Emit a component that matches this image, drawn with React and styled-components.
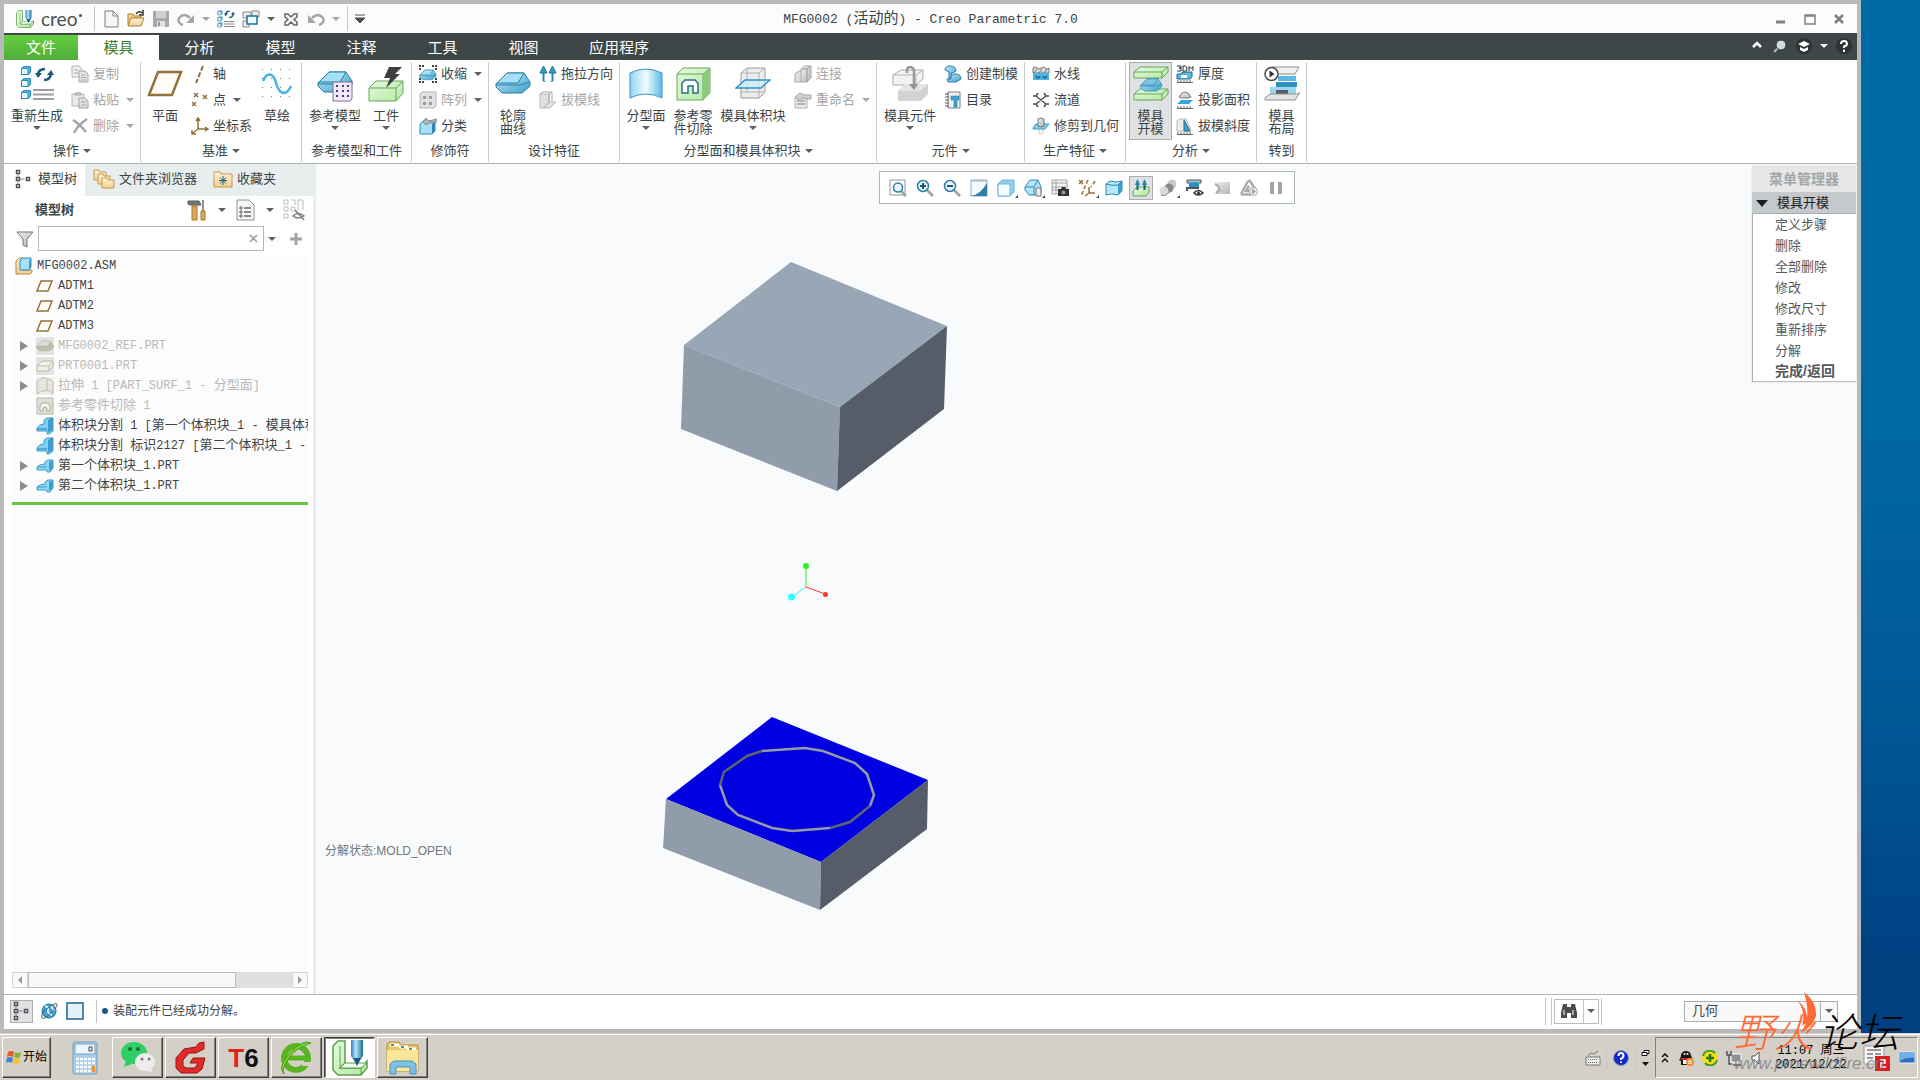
import React, { useState } from "react";
import styled, { createGlobalStyle } from "styled-components";

const GlobalStyle = createGlobalStyle`
  * {
    box-sizing: border-box;
  }
  body {
    margin: 0;
    font-family: "Liberation Sans", "Noto Sans CJK SC", sans-serif;
    font-size: 13px;
    line-height: 16px;
    color: #3b4446;
  }
  button {
    margin: 0;
    padding: 0;
    border: none;
    background: none;
    font: inherit;
    color: inherit;
    cursor: pointer;
  }
  svg {
    display: block;
    flex: none;
  }
`;

/* ---------- Layout ---------- */

const Screen = styled.div`
  display: flex;
  flex-direction: column;
  min-height: 100vh;
  position: relative;
`;

const Desktop = styled.div`
  display: flex;
  flex: 1;
  padding-right: 59px;
  background: linear-gradient(#006aa6 0%, #0069a5 40%, #005795 70%, #003f80 95%);
`;

const Window = styled.main`
  display: flex;
  flex-direction: column;
  flex: 1;
  min-width: 0;
  border: 4px solid #b9b9b9;
  background: #fff;
`;

const Workspace = styled.div`
  display: flex;
  flex: 1;
  min-height: 0;
`;

/* ---------- Shared pieces ---------- */

const Caret = styled.span`
  flex: none;
  width: 0;
  height: 0;
  border: 4px solid transparent;
  border-top-color: ${({ $color }) => $color || "#5c6162"};
  border-bottom: none;
`;

const Mono = styled.span`
  font-family: "Liberation Mono", monospace;
  font-size: ${({ $size }) => $size || 12}px;
`;

// Latin runs are set in the narrow fixed face, Chinese runs keep the parent font
const Mixed = ({ text, size }) =>
  text
    .split(/([\x20-\x7e]+)/)
    .filter(Boolean)
    .map((run, i) =>
      /^[\x20-\x7e]/.test(run) ? (
        <Mono key={i} $size={size}>
          {run}
        </Mono>
      ) : (
        run
      )
    );

const Svg = ({ size = 18, box, children }) => (
  <svg width={size} height={size} viewBox={`0 0 ${box || size} ${box || size}`} fill="none" aria-hidden="true">
    {children}
  </svg>
);

const GradientDefs = styled.svg`
  position: absolute;
  width: 0;
  height: 0;
`;

const Gradients = () => (
  <GradientDefs aria-hidden="true">
    <defs>
      <linearGradient id="blue" x1="0" y1="0" x2="1" y2="1">
        <stop offset="0" stopColor="#c4ecfa" />
        <stop offset="1" stopColor="#3c9fcd" />
      </linearGradient>
      <linearGradient id="sheet" x1="0" y1="0" x2="1" y2="0">
        <stop offset="0" stopColor="#8fd6f5" />
        <stop offset="0.5" stopColor="#f2fbff" />
        <stop offset="1" stopColor="#5cbbe8" />
      </linearGradient>
      <linearGradient id="green" x1="0" y1="0" x2="1" y2="1">
        <stop offset="0" stopColor="#e4fbdc" />
        <stop offset="1" stopColor="#b4e8a4" />
      </linearGradient>
      <linearGradient id="gray" x1="0" y1="0" x2="1" y2="1">
        <stop offset="0" stopColor="#f0f0f0" />
        <stop offset="1" stopColor="#b4b4b4" />
      </linearGradient>
      <linearGradient id="folder" x1="0" y1="0" x2="0" y2="1">
        <stop offset="0" stopColor="#fff4dc" />
        <stop offset="1" stopColor="#f0cf90" />
      </linearGradient>
      <linearGradient id="steel" x1="0" y1="0" x2="1" y2="0">
        <stop offset="0" stopColor="#2d84b4" />
        <stop offset="0.4" stopColor="#b7e4f7" />
        <stop offset="1" stopColor="#1f6c97" />
      </linearGradient>
    </defs>
  </GradientDefs>
);

/* ---------- Icons ---------- */

const Gem = ({ top = "#a4dff5", side = "url(#blue)", line = "#2a7ea6" }) => (
  <g stroke={line} strokeWidth="1">
    <path d="M1 17 12 6h17l6 9v4l-8 7H7l-6-6Z" fill={side} />
    <path d="M1 17 12 6h17l-6 10H1.500Z" fill={top} />
    <path d="M1 18h24l10-3" />
  </g>
);

const Slab = ({ y = 0, fill = "url(#green)", line = "#6aa35c" }) => (
  <g transform={`translate(0 ${y})`} stroke={line} strokeWidth="1" strokeLinejoin="round">
    <path d="M1 6 7 1h28v5l-6 6H1Z" fill={fill} />
    <path d="M1 6h28l6-5M29 6v6" />
  </g>
);

const MiniCube = ({ x = 0, y = 0 }) => (
  <g transform={`translate(${x} ${y})`} strokeWidth="1" stroke="#2b8db8">
    <path d="M0.500 2.500 2.500 0.500h7v6l-2 2h-7Z" fill="#5ab6dc" />
    <path d="M0.500 2.500h6.500v6H0.500Z" fill="#e6f7fd" />
  </g>
);

// two chasing arrows
const Cycle = () => (
  <g stroke="#17597c" strokeWidth="2.500">
    <path d="M3 7q1-5 7-5M16 7q-1 6-7 6" />
    <path d="M0 6h7L3 11ZM12 8h7l-3-5Z" fill="#17597c" stroke="none" />
  </g>
);

const RegenBig = () => (
  <Svg size={36}>
    <MiniCube x={2} y={0} />
    <MiniCube x={2} y={12} />
    <MiniCube x={2} y={24} />
    <g transform="translate(16 1)">
      <Cycle />
    </g>
    <path d="M14 24h21M14 28.500h21M14 33h21" stroke="#9b9fa1" strokeWidth="2" />
  </Svg>
);

const PlaneBig = () => (
  <Svg size={36}>
    <path d="M2 29 11 6h23l-9 23Z" fill="#fffdf8" stroke="#94713a" strokeWidth="2.500" />
  </Svg>
);

const SketchBig = () => (
  <Svg size={36}>
    <g fill="#777">
      {[3, 12, 21, 30].map((y) => [3, 12, 21, 30].map((x) => <rect key={`${x}-${y}`} x={x} y={y} width="1" height="1" />))}
    </g>
    <path d="M4 15c4-9 10-9 13 2s10 14 15 3" stroke="#45b3e8" strokeWidth="2.500" />
  </Svg>
);

const RefModelBig = () => (
  <Svg size={36}>
    <Gem />
    <path d="M16 16h19v17l-2 2H16Z" fill="#efe9f8" stroke="#7d7496" />
    <path d="M19 20h2m4 0h2m3 0h2M19 25h2m4 0h2m3 0h2M19 30h2m4 0h2m3 0h2" stroke="#4b3a82" strokeWidth="2" />
  </Svg>
);

const WorkpieceBig = () => (
  <Svg size={36}>
    <path d="M1 22 8 15h27v12l-7 8H1Z" fill="url(#green)" stroke="#6aa35c" />
    <path d="M1 22h27l7-7M28 22v13" stroke="#6aa35c" />
    <path d="M21 1h13l-7 7h5L18 22l4-10h-6Z" fill="#3d4041" />
  </Svg>
);

const GemBig = () => (
  <Svg size={36}>
    <g transform="translate(0 1)">
      <Gem />
    </g>
  </Svg>
);

const SheetBig = () => (
  <Svg size={36}>
    <path d="M2 7q16-8 32 0v25q-16-8-32 0Z" fill="url(#sheet)" stroke="#3d94c0" />
  </Svg>
);

const CutBig = () => (
  <Svg size={36}>
    <path d="M2 8 8 2h27v25l-7 7H2Z" fill="url(#green)" stroke="#6aa35c" />
    <path d="M2 8h26l7-6M28 8v26" stroke="#6aa35c" />
    <path d="M28 8l7-6v25l-7 7Z" fill="#8fcb7c" />
    <path d="M7 27V17l3-3h10l3 3v10h-5v-7h-5v7Z" fill="#fff" stroke="#2b6f8c" strokeWidth="1.500" />
  </Svg>
);

const VolumeBig = () => (
  <Svg size={36}>
    <path d="M6 7 12 2h18v24l-6 6H6Z" fill="#ededed" stroke="#9a9a9a" />
    <path d="M6 7h18l6-5M24 7v25M12 2v24H6M12 26h18" stroke="#b0b0b0" />
    <path d="M1 22 10 14h25l-9 8Z" fill="#c9ecfa" fillOpacity="0.700" stroke="#2f93c4" strokeWidth="1.500" />
  </Svg>
);

const ComponentBig = () => (
  <Svg size={36}>
    <path d="M1 9 9 4h22v9l-7 6H1Z" fill="#f2f2f2" stroke="#aaa" />
    <path d="M1 9h23l7-5M24 9v10" stroke="#b9b9b9" />
    <path d="M6 25 13 18h23v10l-7 7H6Z" fill="#d2d2d2" />
    <path d="M6 25 13 18h23l-7 7Z" fill="#e4e4e4" />
    <path d="M15 7V4q0-3 3-3t4 3v16" stroke="#999" strokeWidth="2.500" />
    <path d="M17 18h9l-4 6Z" fill="#929292" />
  </Svg>
);

const MoldOpenBig = () => (
  <Svg size={36}>
    <Slab y={0} />
    <Slab y={22} />
    <g transform="translate(7 9) scale(.62)">
      <Gem top="#7cc6e6" />
    </g>
  </Svg>
);

const MoldLayoutBig = () => (
  <Svg size={36}>
    <path d="M3 5 8 1h27l-4 7H8Z" fill="#f1f1f1" stroke="#8d8d8d" />
    <path d="M14 10h18v5H14Z" fill="#5cb9e4" />
    <path d="M12 16h21v5H12Z" fill="#2f8fbf" />
    <path d="M6 21h26v9H6Z" fill="#9bd8f0" />
    <path d="M12 24h12v8H12Z" fill="#5b5f61" />
    <path d="M1 32 6 28h28l2-2-5 8H1Z" fill="#e5e5e5" stroke="#8d8d8d" />
    <circle cx="7.500" cy="8" r="6.500" fill="#fff" stroke="#4a4d4e" strokeWidth="1.500" />
    <path d="M5.500 4.500 10.500 8l-5 3.500Z" fill="#333" />
  </Svg>
);

const CopyIcon = () => (
  <Svg>
    <path d="M1 1h7l3 3v8H1Z" fill="#eee" stroke="#b5b5b5" />
    <path d="M8 6h6l3 3v8H8Z" fill="#e4e4e4" stroke="#a5a5a5" />
    <path d="M10 10h4M10 12.500h5M10 15h5M3 5h4M3 8h4" stroke="#aaa" />
  </Svg>
);

const PasteIcon = () => (
  <Svg>
    <path d="M1 3h12v12H1Z" fill="#e9e9e9" stroke="#b9b9b9" />
    <path d="M4 4V2h2l1-1 1 1h2v2Z" fill="#ccc" stroke="#aaa" />
    <path d="M8 7h6l3 3v7H8Z" fill="#e0e0e0" stroke="#a2a2a2" />
    <path d="M10 11h5M10 14h5" stroke="#a5a5a5" />
  </Svg>
);

const DeleteIcon = () => (
  <Svg>
    <path d="M2 3c5 3 9 7 13 12M16 2C10 6 6 10 3 16" stroke="#a3a3a3" strokeWidth="2.500" />
  </Svg>
);

const AxisIcon = () => (
  <Svg>
    <path d="M12 1 5 18" stroke="#94713a" strokeWidth="2" strokeDasharray="5 2" />
  </Svg>
);

const PointIcon = () => (
  <Svg>
    <path d="m3 2 4 4m0-4-4 4M12 4l4 4m0-4-4 4M1 11l4 4m0-4-4 4" stroke="#94713a" strokeWidth="1.500" />
  </Svg>
);

const CsysIcon = () => (
  <Svg>
    <path d="M7 2v10h10M7 12l-6 5M5 4l2-3 2 3M14 10l3 2-3 2M1 13v4h4" stroke="#94713a" strokeWidth="1.500" />
  </Svg>
);

const ShrinkIcon = () => (
  <Svg>
    <path d="M1 5V1h4M13 1h4v4M17 13v4h-4M5 17H1v-4" stroke="#444" strokeWidth="2" strokeDasharray="2 1" />
    <g transform="translate(0 2) scale(.49)">
      <Gem />
    </g>
  </Svg>
);

const PatternIcon = () => (
  <Svg>
    <path d="M1 3 3 1h14v14l-2 2H1Z" fill="#e2e2e2" stroke="#b3b3b3" />
    <path d="M4 5h3v3H4ZM10 5h3v3h-3ZM4 11h3v3H4ZM10 11h3v3h-3Z" fill="#9d9d9d" />
  </Svg>
);

const ClassifyIcon = () => (
  <Svg>
    <path d="M1 7 4 4h12v10l-3 3H1Z" fill="#a5e1f8" stroke="#2f88b3" />
    <path d="M13 7v10l3-3V4Z" fill="#2f88b3" />
    <path d="m4 5 3-4 3 3 8-2v3l-8 1-3 2Z" fill="#b4b4b4" stroke="#8a8a8a" />
  </Svg>
);

const PullIcon = () => (
  <Svg>
    <path d="M4.500 16V6M13.500 16V6" stroke="#2788b5" strokeWidth="2" />
    <path d="M1 8 4.500 1 8 8ZM10 8l3.500-7L17 8Z" fill="#2da0d4" stroke="#1b6c93" />
    <path d="M4 16.500h3M11 16.500h3" stroke="#5ab6dc" />
  </Svg>
);

const DraftLineIcon = () => (
  <Svg>
    <path d="M1 3h9v8h7l-6 6H1Z" fill="#e0e0e0" stroke="#bbb" />
    <path d="M1 3 4 1h9l-3 2v8l-5 6M13 1v9" stroke="#a5a5a5" />
  </Svg>
);

const JoinIcon = () => (
  <Svg>
    <path d="M1 9 5 6h5v8l-3 3H1Z" fill="#ddd" stroke="#aaa" />
    <path d="M7 4l3-3h7v12l-4 4H7Z" fill="url(#gray)" stroke="#aaa" />
    <path d="M13 4v13M7 4h6l4-3" stroke="#999" />
  </Svg>
);

const RenameIcon = () => (
  <Svg>
    <path d="M1 7h12v10H1Z" fill="#e7e7e7" stroke="#b2b2b2" />
    <path d="M3 10h8M3 13h8" stroke="#a5a5a5" strokeWidth="1.500" />
    <path d="m1 6 5-4 4 2h7v4h-5l-3-1-4 2Z" fill="#cfcfcf" stroke="#a7a7a7" />
  </Svg>
);

const CreateMoldIcon = () => (
  <Svg>
    <path d="M1 5q0-4 5-4 6 0 6 5L9 8H7l1 6H5L5 7Z" fill="url(#blue)" stroke="#2b7ea7" />
    <path d="M7 14q-1-4 4-5 6 0 6 5l-5 3H4l-1-3Z" fill="url(#blue)" stroke="#2b7ea7" />
  </Svg>
);

const CatalogIcon = () => (
  <Svg>
    <path d="M4 1h12v16H4Z" fill="#f0f0f0" stroke="#7d8284" />
    <path d="M1 3h4M1 6h4M1 9h4M1 12h4M1 15h4" stroke="#55595b" />
    <path d="M7 5h8v4h-2v7h-3V9H7Z" fill="#3fa3d0" stroke="#1f6f96" strokeWidth=".5" />
  </Svg>
);

const WaterIcon = () => (
  <Svg>
    <path d="M1 3q2-2 4 0t4 0 4 0 4 0v5H1Z" fill="#d9d9d9" stroke="#777" />
    <path d="M2 8l3-4M7 8l3-4M12 8l3-4" stroke="#777" />
    <path d="M1 8h16v7H1Z" fill="#4cb4e0" />
    <path d="M4 11q2 4 4 0M11 11q2 4 4 0" stroke="#175a7c" strokeWidth="1.500" />
  </Svg>
);

const RunnerIcon = () => (
  <Svg>
    <path d="M4 5 14 13M14 5 4 13M1 5h3l2-3M17 5h-3l-2-3M1 13h3l2 3M17 13h-3l-2 3" stroke="#4c4f50" strokeWidth="1.500" />
  </Svg>
);

const TrimIcon = () => (
  <Svg>
    <path d="M1 11 4 7h13l-4 5H1Z" fill="#7fd1f3" stroke="#2f9ac9" />
    <path d="M6 2q3-2 6 0v7q-3 2-6 0Z" fill="url(#gray)" stroke="#777" />
    <path d="M7 13v3q2 2 4 0v-3" stroke="#aaa" strokeDasharray="2 1" />
  </Svg>
);

const ThicknessIcon = () => (
  <Svg>
    <path d="M1 1h4v2H3h2v3H1M7 1h2q2 0 2 3t-2 2H7ZM13 1v5M13 3h4M17 1v5" stroke="#333" />
    <path d="M1 9h5V7h10v5l-2 2H1Z" fill="#5cb9e2" stroke="#1f6c97" />
    <path d="M5 10h6v3H5Z" fill="#fff" />
    <path d="M1 17.500h16M2 15v2M5 15v2M8 15v2M11 15v2M14 15v2" stroke="#666" />
  </Svg>
);

const ProjectionIcon = () => (
  <Svg>
    <path d="M5 3q4-4 8 0l2 3-3 1H5L3 6Z" fill="url(#gray)" stroke="#777" />
    <path d="M1 13 5 9h12l-4 4Z" fill="#35a5da" />
    <path d="M1 17.500h16M2 15v2M5 15v2M8 15v2M11 15v2M14 15v2" stroke="#666" />
  </Svg>
);

const DraftIcon = () => (
  <Svg>
    <path d="M1 4 3 2h7l5 12H1Z" fill="#ececec" stroke="#b5b5b5" />
    <path d="M8 14V3l6 11Z" fill="#3fa3d0" stroke="#1f6f96" />
    <path d="M1 17.500h16M2 15v2M5 15v2M8 15v2M11 15v2M14 15v2" stroke="#666" />
  </Svg>
);

const CreoMark = ({ size = 18 }) => (
  <Svg size={size} box={36}>
    <path d="M1 6 6 1h7v22l-5 5h21l6-7v7l-6 7H6l-5-5Z" fill="url(#green)" stroke="#5f9c52" strokeWidth="1.500" />
    <path d="M8 28 13 23h22l-6 5Z" fill="#effce9" stroke="#5f9c52" />
    <path d="M8 6v22M29 28v7" stroke="#5f9c52" />
    <path d="M19 0h12v16l-6 9-6-9Z" fill="url(#steel)" />
    <path d="m21 18 4 8 4-8Z" fill="#1c5b80" />
  </Svg>
);

const NewIcon = () => (
  <Svg>
    <path d="M3 1h8l5 5v11H3Z" fill="#f4f6f7" stroke="#7c8284" />
    <path d="M11 1v5h5" stroke="#7c8284" />
  </Svg>
);

const OpenIcon = () => (
  <Svg>
    <path d="M1 4h5l1 2h7v9H1Z" fill="#f2d089" stroke="#a9812f" />
    <path d="m1 16 3-8h13l-3 8Z" fill="url(#folder)" stroke="#a9812f" />
    <path d="M9 4q3-4 6-1M16 0v5h-4" stroke="#333" strokeWidth="1.500" />
  </Svg>
);

const SaveIcon = () => (
  <Svg>
    <path d="M1 1h16v16H1Z" fill="#a9a9a9" />
    <path d="M4 1h10v7H4Z" fill="#cfcfcf" />
    <path d="M5 11h8v6H5Z" fill="#e2e2e2" />
    <path d="M6 12h2v4H6Z" fill="#999" />
  </Svg>
);

const RedoIcon = ({ flip }) => (
  <Svg>
    <g transform={flip ? "matrix(-1 0 0 1 18 0)" : undefined}>
      <path d="M6 15q-6-2-4-7 5-6 11 0" stroke="#a5a5a5" strokeWidth="2.500" />
      <path d="M17 5v8H9Z" fill="#a5a5a5" />
    </g>
  </Svg>
);

const RegenIcon = () => (
  <Svg box={36}>
    <MiniCube x={1} y={1} />
    <MiniCube x={1} y={13} />
    <MiniCube x={1} y={25} />
    <g transform="translate(14 0) scale(1.150)">
      <Cycle />
    </g>
    <path d="M14 23h21M14 28h21M14 33h21" stroke="#888" strokeWidth="2" />
  </Svg>
);

const WindowsIcon = () => (
  <Svg>
    <path d="M1 2h8v6H1ZM10 1h7v6h-7ZM1 11h6v6H1Z" fill="#eee" stroke="#888" />
    <path d="M5 6h10v8H5Z" fill="#eaf7fd" stroke="#1f6f96" strokeWidth="1.500" />
  </Svg>
);

const CloseWinIcon = () => (
  <Svg>
    <path d="M3 4h3l3 3 3-3h3v3l-3 2.500 3 2.500v3h-3l-3-3-3 3H3v-3l3-2.500L3 7Z" fill="#f6f6f6" stroke="#666" strokeWidth="1.500" />
  </Svg>
);

const HouseTree = () => (
  <Svg size={20}>
    <path d="M4 5.500v2M4 12.500v2M6.500 10h4" stroke="#777c7e" />
    <path
      d="M2.500 1.500h3v3h-3ZM2.500 8.500h3v3h-3ZM2.500 15.500h3v3h-3ZM12.500 8.500h3v3h-3Z"
      fill="#fff"
      stroke="#4c5153"
      strokeWidth="1.500"
    />
  </Svg>
);

const FoldersIcon = () => (
  <Svg size={22}>
    {[0, 4, 8].map((o) => (
      <path key={o} d={`M${1 + o} ${2 + o}h5l1 2h6v8H${1 + o}Z`} fill="url(#folder)" stroke="#c49a4c" />
    ))}
  </Svg>
);

const FavoriteIcon = () => (
  <Svg size={20}>
    <path d="M1 3h6l1 2h11v13H1Z" fill="url(#folder)" stroke="#c49a4c" />
    <path d="M10 7v9M6 11.500h8M7 8.500l6 6M13 8.500l-6 6" stroke="#1b5f82" />
  </Svg>
);

const ToolsIcon = () => (
  <Svg size={22}>
    <path d="M1 2h11l2 4H3L1 5Z" fill="#73797b" stroke="#55595b" />
    <path d="M5 7h5v14H5Z" fill="#dba75c" stroke="#a9762c" />
    <path d="M16 1v11" stroke="#8d9294" strokeWidth="2" />
    <path d="M14 12h4v9h-4Z" fill="#dba75c" stroke="#a9762c" />
  </Svg>
);

const ListPageIcon = () => (
  <Svg size={22}>
    <path d="M2 1h12l5 5v15H2Z" fill="#f4f6f7" stroke="#8c9294" />
    <path d="M5 8h2v2H5ZM5 12h2v2H5ZM5 16h2v2H5Z" stroke="#666" />
    <path d="M9 9h7M9 13h7M9 17h7" stroke="#666" strokeWidth="1.500" />
  </Svg>
);

const TreeOffIcon = () => (
  <Svg size={22}>
    <path d="M1 1h4v4H1ZM1 8h4v4H1ZM1 15h4v4H1ZM8 8h4v4H8ZM8 1h4v5M15 11V1h5v10" stroke="#bdbdbd" />
    <path d="M10 17q5-5 11 0-6 4-11 0ZM12 11l9 10" stroke="#7d7d7d" strokeWidth="1.500" />
  </Svg>
);

const FunnelIcon = () => (
  <Svg>
    <path d="M1 2h16l-6 7v8l-4-2V9Z" fill="url(#gray)" stroke="#6f7476" />
  </Svg>
);

const AsmIcon = () => (
  <Svg>
    <path d="M1 4 4 1h4v12h9v2l-2 2H1Z" fill="url(#folder)" stroke="#b98a35" />
    <path d="M5 3 7 1h9v9l-2 3H5Z" fill="#a4e0f8" stroke="#2f8db9" />
    <path d="M14 4v8l2-2V1Z" fill="#3a9dcb" />
  </Svg>
);

const DatumIcon = () => (
  <Svg>
    <path d="M1 14 5 4h11l-4 10Z" fill="#fffdf8" stroke="#94713a" strokeWidth="1.500" />
  </Svg>
);

const FadedGem = () => (
  <Svg>
    <path d="M0 0h18v18H0Z" fill="#e3e3e3" />
    <g transform="translate(0 1) scale(.5)">
      <Gem top="#deded4" side="#c0c0b0" line="#b3b3a6" />
    </g>
  </Svg>
);

const FadedSlab = () => (
  <Svg>
    <path d="M0 0h18v18H0Z" fill="#e3e3e3" />
    <path d="m1 9 5-5h11v5l-4 5H1Z" fill="#f0f0e6" stroke="#bcbcae" />
    <path d="M1 9h12l4-5M13 9v5" stroke="#bcbcae" />
  </Svg>
);

const FadedSheet = () => (
  <Svg>
    <path d="M0 0h18v18H0Z" fill="#ededed" />
    <path d="M1 5q7-7 10-3 3 0 6 3v12q-4-5-8-3-5-1-8 3Z" fill="#e6e6dc" stroke="#bcbcae" />
    <path d="M11 2v12" stroke="#bcbcae" />
  </Svg>
);

const FadedCut = () => (
  <Svg>
    <path d="M1 1h16v16H1Z" fill="#e0e0d4" stroke="#b4b4a6" />
    <path d="M4 14V9l2-3h6l2 3v5h-3v-3q-2-2-4 0v3Z" fill="#f7f7f2" stroke="#a9a99b" />
  </Svg>
);

const SplitIcon = () => (
  <Svg>
    <path d="M1 11q2-4 7-4V3l3-2h6v13l-4 3h-2v-3H1Z" fill="#7fd0f2" stroke="#3a9dcb" />
    <path d="M12 4v12l5-3V1Z" fill="#3f9fca" />
    <path d="M1 12h10M12 4l5-3" stroke="#2a86b0" />
  </Svg>
);

const PartIcon = () => (
  <Svg>
    <path d="M1 10q3-3 8-3V5l3-2h5v8l-3 4h-3v-2H1Z" fill="#8fd8f5" stroke="#3a9dcb" />
    <path d="M13 5v9l4-3V3Z" fill="#3f9fca" />
    <path d="M1 10h10" stroke="#3a9dcb" />
  </Svg>
);

const Lens = ({ x = 7, y = 7 }) => (
  <g>
    <path d={`M${x + 4} ${y + 4}l6 6`} stroke="#a3a7a9" strokeWidth="3" />
    <circle cx={x} cy={y} r="5.500" fill="#eaf7fd" stroke="#2b7ea7" strokeWidth="1.500" />
  </g>
);

const ViewIcons = {
  refit: (
    <Svg>
      <path d="M1 1h15v15H1Z" stroke="#8f9597" />
      <path d="m12 12 5 5" stroke="#a3a7a9" strokeWidth="3" />
      <circle cx="9" cy="8.500" r="4.500" fill="#eaf7fd" stroke="#2b7ea7" strokeWidth="1.500" />
    </Svg>
  ),
  zoomIn: (
    <Svg>
      <Lens />
      <path d="M4 7h6M7 4v6" stroke="#17597c" strokeWidth="2" />
    </Svg>
  ),
  zoomOut: (
    <Svg>
      <Lens />
      <path d="M4 7h6" stroke="#17597c" strokeWidth="2" />
    </Svg>
  ),
  repaint: (
    <Svg>
      <path d="M1 1h16v16H1Z" fill="#f3fbff" stroke="#80b6cf" />
      <path d="M1 17q9-1 16-13v13Z" fill="#2e7ea5" />
      <path d="M1 2h16" stroke="#aaa" />
    </Svg>
  ),
  display: (
    <Svg>
      <path d="M1 5 5 1h12v12l-4 4H1Z" fill="#8fd0ee" stroke="#6fb6d8" />
      <path d="M1 5h12v12H1Z" fill="#f7fcff" stroke="#6fb6d8" />
    </Svg>
  ),
  orient: (
    <Svg>
      <path d="M1 8 6 1h8l3 7v6l-3 2H5l-4-5Z" fill="#b4e5f8" stroke="#2f88b3" />
      <path d="M1 8h9l4-7M10 8v8" stroke="#2f88b3" />
      <path d="M12 9h5v8h-5Z" fill="#eee" stroke="#777" />
    </Svg>
  ),
  manager: (
    <Svg>
      <path d="M1 1h15v14H1Z" fill="#f5f5f5" stroke="#a2a2a2" />
      <path d="M1 4h15M5 1v14M1 8h15M1 11h15" stroke="#a2a2a2" />
      <path d="M7 10h3l1-2h3l1 2h3v7H7Z" fill="#333" />
      <circle cx="12.500" cy="13.500" r="2" fill="#999" />
    </Svg>
  ),
  datum: (
    <Svg>
      <path d="m1 1 4 4m0-4L1 5M11 8v6h6M11 14l-4 3" stroke="#94713a" strokeWidth="1.500" />
      <path d="M10 1 3 17M17 2l-4 6" stroke="#94713a" strokeWidth="1.500" strokeDasharray="4 2" />
    </Svg>
  ),
  section: (
    <Svg>
      <path d="m1 5 4-3q6 2 12 0v10l-4 4q-7-2-12 0Z" fill="#b9e7fa" stroke="#2c84ad" />
      <path d="M13 6v10l4-4V2Z" fill="#3f9fca" />
      <path d="M1 5q6 2 12 1l4-4" stroke="#2c84ad" />
    </Svg>
  ),
  open: (
    <Svg>
      <path d="m1 12 4-4h12v5l-3 4H1Z" fill="url(#green)" stroke="#6aa35c" />
      <path d="M5.500 2v9M12.500 2v9" stroke="#175a7c" strokeWidth="2" />
      <path d="M3 6 5.500 0 8 6ZM10 6l2.500-6L15 6Z" fill="#2788b5" />
    </Svg>
  ),
  shade: (
    <Svg>
      <circle cx="13" cy="5" r="4.500" fill="#c9c9c9" />
      <circle cx="10" cy="9" r="4.500" fill="#8a8a8a" />
      <circle cx="5" cy="12" r="4.500" fill="#d8d8d8" />
      <path d="M2 16q5 2 8-3" stroke="#8a8a8a" />
    </Svg>
  ),
  simulate: (
    <Svg>
      <path d="M1 1h14v3H1Z" fill="#8ecbe6" stroke="#555" />
      <path d="M3 4h10v4H3Z" fill="#2e8ebd" />
      <path d="M1 12V9h12" stroke="#555" strokeWidth="2" />
      <path d="M8 14q4-5 9 0-5 4-9 0Z" fill="#fff" stroke="#333" strokeWidth="1.500" />
      <circle cx="12.500" cy="14" r="1.500" fill="#333" />
    </Svg>
  ),
  measure: (
    <Svg>
      <path d="M1 3h16v12H1q5-2 5-6T1 3Z" fill="url(#gray)" />
      <path d="M2 5q8 4 1 9" stroke="#aaa" strokeWidth="2" />
    </Svg>
  ),
  warn: (
    <Svg>
      <path d="M8 2h2l6 9M1 15 8 2M1 15.500h10M9 7l-3 5h4" stroke="#ababab" strokeWidth="2.500" />
      <circle cx="13.500" cy="12.500" r="4" fill="#eee" stroke="#aaa" />
      <path d="m12 10 4 2.500-4 2.500Z" fill="#999" />
    </Svg>
  ),
  pause: (
    <Svg>
      <path d="M3 3h4v12H3ZM11 3h4v12h-4Z" fill="#a3a3a3" />
    </Svg>
  ),
};

/* ---------- Title bar ---------- */

const TitleBar = styled.header`
  display: grid;
  grid-template-columns: 1fr auto 1fr;
  align-items: center;
  height: 29px;
  background: #fcfcfc;
`;

const QuickAccess = styled.div`
  display: flex;
  align-items: center;
  gap: 7px;
  padding-left: 12px;
`;

const Brand = styled.span`
  display: flex;
  font-family: Lato, sans-serif;
  font-size: 19px;
  line-height: 24px;
  margin-right: 5px;
  color: #4a4f50;

  &::after {
    content: "";
    width: 3px;
    height: 3px;
    margin: 7px 0 0 2px;
    border-radius: 50%;
    background: #4a4f50;
  }
`;

const Rule = styled.span`
  width: 1px;
  height: ${({ $height }) => $height || 25}px;
  background: #c3c7c8;
`;

const Title = styled.h1`
  margin: 0;
  font-size: 15px;
  line-height: 24px;
  font-weight: 400;
  white-space: pre;
`;

const WindowButtons = styled.div`
  display: flex;
  justify-content: flex-end;
  gap: 13px;
  padding-right: 10px;
`;

const CustomizeMark = () => (
  <svg width="10" height="10" viewBox="0 0 10 10" aria-hidden="true">
    <path d="M0 1h10M0 4h10L5 9Z" fill="#4a4f50" stroke="#4a4f50" />
  </svg>
);

/* ---------- Tabs ---------- */

const TabBar = styled.nav`
  display: flex;
  height: 27px;
  padding-top: 2px;
  background: #3e4647;
`;

const Tab = styled.button`
  min-width: ${({ $kind }) => ($kind === "file" ? 74 : 81)}px;
  padding: 0 ${({ $kind }) => ($kind === "file" ? 20 : 25)}px;
  font-size: 15px;
  line-height: 24px;
  white-space: nowrap;
  color: ${({ $kind }) => ($kind === "active" ? "#3d7f1c" : "#fff")};
  background: ${({ $kind }) =>
    $kind === "file" ? "linear-gradient(#62cf40, #52ac37)" : $kind === "active" ? "#fff" : "none"};
`;

const TabTools = styled.div`
  display: flex;
  align-items: center;
  gap: 7px;
  margin-left: auto;
  padding: 0 4px 4px 0;
`;

/* ---------- Ribbon ---------- */

const RibbonBar = styled.div`
  display: flex;
  height: 104px;
  padding-top: 2px;
  border-bottom: 1px solid #a9b2b2;
`;

const Group = styled.section`
  display: flex;
  flex-direction: column;
  flex: none;
  width: ${({ $width }) => $width}px;
  height: 100px;
  border-right: 1px solid #c8cdcd;
`;

const GroupBody = styled.div`
  display: flex;
  flex: 1;
  padding-left: ${({ $pad }) => $pad || 0}px;
`;

const GroupTitle = styled.div`
  display: flex;
  align-items: center;
  justify-content: center;
  gap: 4px;
  height: 22px;
  white-space: nowrap;
`;

const BigButton = styled.button`
  display: flex;
  flex-direction: column;
  align-items: center;
  flex: none;
  width: ${({ $width }) => $width}px;
  height: 78px;
  padding-top: 3px;
  line-height: 13px;
  border: 1px solid ${({ $pressed }) => ($pressed ? "#a9adae" : "transparent")};
  background: ${({ $pressed }) => ($pressed ? "#e0e1e3" : "none")};
`;

const BigLabel = styled.span`
  margin: 7px -4px 4px;
  white-space: pre;
`;

const SmallColumn = styled.div`
  display: flex;
  flex-direction: column;
  flex: 1;
  padding-left: ${({ $pad }) => $pad}px;
  min-width: 0;
`;

const SmallButton = styled.button`
  display: flex;
  align-items: center;
  gap: 4px;
  height: 26px;
  padding-bottom: 2px;
  white-space: nowrap;
  color: ${({ $off }) => ($off ? "#a6a6a6" : "inherit")};

  ${Caret} {
    margin-left: 3px;
  }
`;

const groups = [
  {
    title: "操作", menu: true, width: 137,
    items: [
      { big: "重新生成", icon: RegenBig, width: 66, menu: true },
      {
        pad: 1,
        small: [
          { label: "复制", icon: CopyIcon, off: true },
          { label: "粘贴", icon: PasteIcon, off: true, menu: true },
          { label: "删除", icon: DeleteIcon, off: true, menu: true },
        ],
      },
    ],
  },
  {
    title: "基准", menu: true, width: 161,
    items: [
      { big: "平面", icon: PlaneBig, width: 48 },
      {
        pad: 2,
        small: [
          { label: "轴", icon: AxisIcon },
          { label: "点", icon: PointIcon, menu: true },
          { label: "坐标系", icon: CsysIcon },
        ],
      },
      { big: "草绘", icon: SketchBig, width: 48 },
    ],
  },
  {
    title: "参考模型和工件", width: 110,
    items: [
      { big: "参考模型", icon: RefModelBig, width: 66, menu: true },
      { big: "工件", icon: WorkpieceBig, width: 36, menu: true },
    ],
  },
  {
    title: "修饰符", width: 77,
    items: [
      {
        pad: 7,
        small: [
          { label: "收缩", icon: ShrinkIcon, menu: true },
          { label: "阵列", icon: PatternIcon, off: true, menu: true, dark: true },
          { label: "分类", icon: ClassifyIcon },
        ],
      },
    ],
  },
  {
    title: "设计特征", width: 131,
    items: [
      { big: "轮廓\n曲线", icon: GemBig, width: 48 },
      {
        pad: 2,
        small: [
          { label: "拖拉方向", icon: PullIcon },
          { label: "拔模线", icon: DraftLineIcon, off: true },
        ],
      },
    ],
  },
  {
    title: "分型面和模具体积块", menu: true, width: 257,
    items: [
      { big: "分型面", icon: SheetBig, width: 52, menu: true },
      { big: "参考零\n件切除", icon: CutBig, width: 42 },
      { big: "模具体积块", icon: VolumeBig, width: 78, menu: true },
      {
        pad: 2,
        small: [
          { label: "连接", icon: JoinIcon, off: true },
          { label: "重命名", icon: RenameIcon, off: true, menu: true },
        ],
      },
    ],
  },
  {
    title: "元件", menu: true, width: 148,
    items: [
      { big: "模具元件", icon: ComponentBig, width: 66, menu: true },
      {
        pad: 1,
        small: [
          { label: "创建制模", icon: CreateMoldIcon },
          { label: "目录", icon: CatalogIcon },
        ],
      },
    ],
  },
  {
    title: "生产特征", menu: true, width: 101,
    items: [
      {
        pad: 7,
        small: [
          { label: "水线", icon: WaterIcon },
          { label: "流道", icon: RunnerIcon },
          { label: "修剪到几何", icon: TrimIcon },
        ],
      },
    ],
  },
  {
    title: "分析", menu: true, width: 131, pad: 3,
    items: [
      { big: "模具\n开模", icon: MoldOpenBig, width: 43, pressed: true },
      {
        pad: 4,
        small: [
          { label: "厚度", icon: ThicknessIcon },
          { label: "投影面积", icon: ProjectionIcon },
          { label: "拔模斜度", icon: DraftIcon },
        ],
      },
    ],
  },
  {
    title: "转到", width: 50,
    items: [{ big: "模具\n布局", icon: MoldLayoutBig, width: 49 }],
  },
];

const Ribbon = () => (
  <RibbonBar>
    {groups.map((group) => (
      <Group key={group.title} $width={group.width}>
        <GroupBody $pad={group.pad}>
          {group.items.map((item, i) =>
            item.big ? (
              <BigButton key={i} $width={item.width} $pressed={item.pressed}>
                <item.icon />
                <BigLabel>{item.big}</BigLabel>
                {item.menu && <Caret />}
              </BigButton>
            ) : (
              <SmallColumn key={i} $pad={item.pad}>
                {item.small.map((s) => (
                  <SmallButton key={s.label} $off={s.off}>
                    <s.icon />
                    {s.label}
                    {s.menu && <Caret $color={s.off && !s.dark ? "#a6a6a6" : undefined} />}
                  </SmallButton>
                ))}
              </SmallColumn>
            )
          )}
        </GroupBody>
        <GroupTitle>
          {group.title}
          {group.menu && <Caret />}
        </GroupTitle>
      </Group>
    ))}
  </RibbonBar>
);

/* ---------- Model tree ---------- */

const Side = styled.aside`
  display: flex;
  flex-direction: column;
  flex: none;
  width: 312px;
  border-right: 3px solid #e8edee;
`;

const SideTabs = styled.div`
  display: flex;
  height: 32px;
  margin-right: -3px;
  background: #e8edee;
`;

const SideTab = styled.button`
  display: flex;
  align-items: center;
  gap: 4px;
  padding: 0 8px 2px;
  white-space: nowrap;
  background: ${({ $active }) => ($active ? "#fff" : "none")};
  ${({ $active }) => $active && "width: 81px; padding-left: 10px;"}
`;

const SideHead = styled.div`
  display: flex;
  align-items: center;
  gap: 9px;
  height: 28px;
  padding: 0 8px 0 31px;
`;

const SideTitle = styled.h2`
  flex: 1;
  margin: 0;
  font-size: 13px;
  font-weight: 700;
`;

const FilterRow = styled.div`
  display: flex;
  align-items: center;
  height: 32px;
  padding: 0 10px 3px 12px;
  gap: 4px;
`;

const SearchBox = styled.label`
  display: flex;
  align-items: center;
  flex: 1;
  height: 25px;
  padding-right: 5px;
  border: 1px solid #aebabb;
  background: #fff;
`;

const SearchInput = styled.input`
  flex: 1;
  min-width: 0;
  height: 21px;
  border: none;
  outline: none;
  font: inherit;
`;

const AddButton = styled.button`
  margin-left: 9px;
`;

const TreeArea = styled.div`
  flex: 1;
  min-height: 0;
  margin: 0 5px 0 8px;
  background: #fcfcfc;
`;

const TreeList = styled.ul`
  margin: 0;
  padding: 0 0 6px;
  list-style: none;
  border-bottom: 3px solid #62c840;
`;

const TreeRow = styled.li`
  display: flex;
  align-items: center;
  height: 20px;
  padding-left: ${({ $root }) => ($root ? 3 : 6)}px;
  overflow: hidden;
  white-space: pre;
  color: ${({ $off }) => ($off ? "#b9b9b9" : "#3f4546")};

  svg {
    margin-right: 4px;
  }
`;

const NodeLabel = styled.span`
  height: 18px;
  line-height: 16px;
`;

const Expander = styled.span`
  flex: none;
  width: 18px;

  &::before {
    content: "";
    display: ${({ $shown }) => ($shown ? "block" : "none")};
    width: 0;
    margin-left: 2px;
    border: 5px solid transparent;
    border-left: 8px solid #8c8c8c;
    border-right: none;
  }
`;

const ScrollBar = styled.div`
  display: grid;
  grid-template-columns: 16px 208px 1fr 16px;
  height: 16px;
  margin: 0 5px 6px 8px;
  background: #dfe0e2;
`;

const ScrollPart = styled.span`
  display: flex;
  align-items: center;
  justify-content: center;
  border: 1px solid ${({ $thumb }) => ($thumb ? "#b9bcbd" : "#d3d5d6")};
  background: #f8f8f8;

  &::before {
    content: "";
    display: ${({ $thumb }) => ($thumb ? "none" : "block")};
    border: 4px solid transparent;
    border-${({ $dir }) => $dir || "left"}: 4px solid #999;
    border-${({ $dir }) => ($dir === "right" ? "left" : "right")}: none;
  }
`;

const nodes = [
  { label: "MFG0002.ASM", icon: AsmIcon, root: true },
  { label: "ADTM1", icon: DatumIcon },
  { label: "ADTM2", icon: DatumIcon },
  { label: "ADTM3", icon: DatumIcon },
  { label: "MFG0002_REF.PRT", icon: FadedGem, off: true, open: true },
  { label: "PRT0001.PRT", icon: FadedSlab, off: true, open: true },
  { label: "拉伸 1 [PART_SURF_1 - 分型面]", icon: FadedSheet, off: true, open: true },
  { label: "参考零件切除 1", icon: FadedCut, off: true },
  { label: "体积块分割 1 [第一个体积块_1 - 模具体积", icon: SplitIcon },
  { label: "体积块分割 标识2127 [第二个体积块_1 -", icon: SplitIcon },
  { label: "第一个体积块_1.PRT", icon: PartIcon, open: true },
  { label: "第二个体积块_1.PRT", icon: PartIcon, open: true },
];

const ModelTree = () => {
  const [query, setQuery] = useState("");

  return (
    <Side>
      <SideTabs>
        <SideTab $active>
          <HouseTree />
          模型树
        </SideTab>
        <SideTab>
          <FoldersIcon />
          文件夹浏览器
        </SideTab>
        <SideTab>
          <FavoriteIcon />
          收藏夹
        </SideTab>
      </SideTabs>
      <SideHead>
        <SideTitle>模型树</SideTitle>
        <ToolsIcon />
        <Caret />
        <ListPageIcon />
        <Caret />
        <TreeOffIcon />
      </SideHead>
      <FilterRow>
        <FunnelIcon />
        <SearchBox>
          <SearchInput aria-label="过滤" value={query} onChange={(e) => setQuery(e.target.value)} />
          <Svg size={9}>
            <path d="m1 1 7 7M8 1 1 8" stroke="#999" strokeWidth="1.500" />
          </Svg>
        </SearchBox>
        <Caret />
        <AddButton aria-label="添加">
          <Svg size={14}>
            <path d="M7 1v12M1 7h12" stroke="#a3a3a3" strokeWidth="3" />
          </Svg>
        </AddButton>
      </FilterRow>
      <TreeArea>
        <TreeList>
          {nodes.map((node) => (
            <TreeRow key={node.label} $root={node.root} $off={node.off}>
              {!node.root && <Expander $shown={node.open} />}
              <node.icon />
              <NodeLabel>
                <Mixed text={node.label} />
              </NodeLabel>
            </TreeRow>
          ))}
        </TreeList>
      </TreeArea>
      <ScrollBar>
        <ScrollPart $dir="right" />
        <ScrollPart $thumb />
        <span />
        <ScrollPart $dir="left" />
      </ScrollBar>
    </Side>
  );
};

/* ---------- Graphics area ---------- */

const Viewport = styled.section`
  position: relative;
  flex: 1;
  min-width: 0;
  display: flex;
  flex-direction: column;
  align-items: center;
  background: #f8fafc;
`;

const Scene = styled.svg`
  position: absolute;
  inset: 0;
  width: 100%;
  height: 100%;
`;

const ViewToolbar = styled.div`
  position: relative;
  display: flex;
  align-items: center;
  gap: 3px;
  height: 33px;
  margin-top: 7px;
  padding: 0 6px;
  border: 1px solid #acb6b8;
  background: #fff;
`;

const ViewButton = styled.button`
  position: relative;
  display: flex;
  align-items: center;
  justify-content: center;
  width: 24px;
  height: 24px;
  border: 1px solid ${({ $pressed }) => ($pressed ? "#a9adae" : "transparent")};
  background: ${({ $pressed }) => ($pressed ? "#e0e1e3" : "none")};

  &::after {
    content: "";
    display: ${({ $menu }) => ($menu ? "block" : "none")};
    position: absolute;
    right: -1px;
    bottom: 1px;
    border-left: 3px solid transparent;
    border-bottom: 3px solid #444;
  }
`;

const StateNote = styled.div`
  position: absolute;
  left: 9px;
  bottom: 134px;
  font-size: 12px;
  line-height: 18px;
  color: #73787b;
`;

const MenuManager = styled.div`
  position: absolute;
  top: 1px;
  right: 0;
  width: 106px;
  border: 1px solid #eceeef;
  background: #fff;
`;

const MenuCaption = styled.div`
  height: 26px;
  font-size: 14px;
  font-weight: 700;
  line-height: 26px;
  text-align: center;
  color: #a3a5a6;
  background: #e6e7e8;
`;

const MenuHeader = styled.button`
  display: flex;
  align-items: center;
  gap: 9px;
  width: 100%;
  height: 22px;
  padding-left: 4px;
  color: #1c2022;
  background: #c5c9cb;
  border-bottom: 1px solid #a9adae;
`;

const MenuItem = styled.button`
  display: block;
  width: 100%;
  height: 21px;
  padding-left: 22px;
  line-height: 20px;
  text-align: left;
  color: #55595b;
  border-left: 1px solid #a9adae;
  font-size: ${({ $strong }) => ($strong ? 14 : 13)}px;
  font-weight: ${({ $strong }) => ($strong ? 700 : 400)};

  &:last-child {
    border-bottom: 1px solid #b9bdbe;
  }
`;

const tools = [
  ["refit"], ["zoomIn"], ["zoomOut"], ["repaint"], ["display", "menu"], ["orient", "menu"], ["manager"],
  ["datum", "menu"], ["section"], ["open", "pressed"], ["shade", "menu"], ["simulate"], ["measure"], ["warn"], ["pause"],
];

const menuItems = ["定义步骤", "删除", "全部删除", "修改", "修改尺寸", "重新排序", "分解", "完成/返回"];

const Graphics = () => (
  <Viewport>
    <Scene viewBox="316 164 1541 830" aria-hidden="true">
      <path d="M791 262 947 326 840 407 684 345Z" fill="#99a6b6" />
      <path d="M684 345 840 407 837 491 681 429Z" fill="#909caa" />
      <path d="M840 407 947 326 944 409 837 491Z" fill="#575d68" />
      <path d="M772 717 928 780 821 862 666 799Z" fill="#0000e1" />
      <path d="M666 799 821 862 820 910 663 848Z" fill="#909caa" />
      <path d="M821 862 928 780 927 829 820 910Z" fill="#575d68" />
      <g fill="none" strokeWidth="2.500">
        <path d="M762 751 805 748 823 751 855 763 867 774 874 795 870 806" stroke="#929ba6" />
        <path d="M870 806 850 822 830 828" stroke="#5d646d" />
        <path d="M830 828 792 831 772 828 738 815 727 805 720 785" stroke="#929ba6" />
        <path d="M720 785 724 772 747 756 762 751" stroke="#5d646d" />
      </g>
      <path d="M806 587V566" stroke="#2df02d" />
      <path d="M806 587 825 594" stroke="#ff3030" />
      <path d="M806 587 792 597" stroke="#2df5f5" />
      <circle cx="806" cy="566" r="3" fill="#2df02d" />
      <circle cx="825.500" cy="594.500" r="2.500" fill="#ff3030" />
      <circle cx="791.500" cy="597" r="3.500" fill="#2dffff" />
    </Scene>
    <ViewToolbar>
      {tools.map(([name, state]) => (
        <ViewButton key={name} aria-label={name} $menu={state === "menu"} $pressed={state === "pressed"}>
          {ViewIcons[name]}
        </ViewButton>
      ))}
    </ViewToolbar>
    <StateNote>分解状态:MOLD_OPEN</StateNote>
    <MenuManager>
      <MenuCaption>菜单管理器</MenuCaption>
      <MenuHeader>
        <Svg size={12}>
          <path d="M0 3h12L6 10Z" fill="#1c2022" />
        </Svg>
        模具开模
      </MenuHeader>
      {menuItems.map((item) => (
        <MenuItem key={item} $strong={item === "完成/返回"}>
          {item}
        </MenuItem>
      ))}
    </MenuManager>
  </Viewport>
);

/* ---------- Status bar ---------- */

const StatusBar = styled.footer`
  display: flex;
  align-items: center;
  gap: 5px;
  height: 35px;
  padding: 0 19px 2px 6px;
  border-top: 1px solid #acb6b8;
`;

const StatusButton = styled.button`
  display: flex;
  align-items: center;
  justify-content: center;
  width: ${({ $pressed }) => ($pressed ? 23 : 21)}px;
  height: 23px;
  border: 1px solid ${({ $pressed }) => ($pressed ? "#a9adae" : "transparent")};
  background: ${({ $pressed }) => ($pressed ? "#e0e1e3" : "none")};
`;

const Message = styled.p`
  display: flex;
  align-items: center;
  gap: 5px;
  flex: 1;
  margin: 0;
  font-size: 12px;

  &::before {
    content: "";
    width: 6px;
    height: 6px;
    border-radius: 50%;
    background: #17597c;
  }
`;

const FindButton = styled.button`
  display: flex;
  align-items: center;
  height: 25px;
  margin: 0 -3px;
  border: 1px solid #b9bdbe;

  svg {
    margin: 0 5px;
  }

  ${Caret} {
    margin: 0 3px;
  }
`;

const SelectBox = styled.label`
  display: grid;
  align-items: center;
  width: 154px;
  height: 21px;
  margin-left: 77px;
  border: 1px solid #a9adae;
  background: #f8f8f8;
`;

const FilterSelect = styled.select`
  grid-area: 1 / 1;
  appearance: none;
  height: 19px;
  padding: 0 0 0 7px;
  border: none;
  font: inherit;
  color: inherit;
  background: none;
`;

const SelectArrow = styled.span`
  grid-area: 1 / 1;
  justify-self: end;
  display: flex;
  align-items: center;
  justify-content: center;
  width: 17px;
  height: 19px;
  border-left: 1px solid #a9adae;
  pointer-events: none;
`;

const Status = () => (
  <StatusBar>
    <StatusButton $pressed aria-label="模型树">
      <HouseTree />
    </StatusButton>
    <StatusButton aria-label="浏览器">
      <Svg>
        <circle cx="9" cy="9" r="7" fill="#3fa3d6" stroke="#1f6f96" />
        <path d="M5 4q4 1 3 4t4 5M12 4q-1 3 3 4" stroke="#d5f0fb" strokeWidth="2" />
        <path d="M2 16Q0 12 8 6t9-4-6 9-9 5Z" stroke="#5b6061" />
      </Svg>
    </StatusButton>
    <StatusButton aria-label="全屏">
      <Svg>
        <path d="M1 1h16v16H1Z" fill="#e4f2f9" stroke="#1f6389" strokeWidth="1.500" />
      </Svg>
    </StatusButton>
    <Svg size={1} />
    <Rule $height={23} />
    <Message>装配元件已经成功分解。</Message>
    <Rule $height={27} />
    <Rule $height={27} />
    <FindButton aria-label="查找">
      <Svg>
        <path d="M3 2h4v3h4V2h4l2 9v5h-6v-5H7v5H1v-5Z" fill="#4a4d4e" />
        <path d="M3 8h2v5H3ZM12 8h2v5h-2Z" fill="#a8abac" />
      </Svg>
      <Rule $height={23} />
      <Caret />
    </FindButton>
    <Rule $height={27} />
    <SelectBox>
      <FilterSelect aria-label="选择过滤器" defaultValue="几何">
        <option>几何</option>
      </FilterSelect>
      <SelectArrow>
        <Caret />
      </SelectArrow>
    </SelectBox>
  </StatusBar>
);

/* ---------- Taskbar ---------- */

const TaskBar = styled.footer`
  display: flex;
  gap: 2px;
  height: 47px;
  padding: 3px 2px 2px;
  border-top: 1px solid #d4d0c8;
  box-shadow: inset 0 1px #fff;
  background: #d4d0c8;
`;

const TaskButton = styled.button`
  display: flex;
  align-items: center;
  justify-content: center;
  width: 51px;
  height: 41px;
  border: ${({ $flat }) => ($flat ? 0 : 1)}px solid;
  border-color: ${({ $active }) => ($active ? "#404040 #fff #fff #404040" : "#fff #404040 #404040 #fff")};
  box-shadow: ${({ $active, $flat }) =>
    $flat ? "none" : $active ? "inset 1px 1px #808080" : "inset -1px -1px #808080"};
  background: ${({ $active }) => ($active ? "#fff" : "none")};
`;

const StartButton = styled(TaskButton)`
  width: 49px;
  gap: 1px;
  margin-right: 6px;
  padding-bottom: 2px;
  font-size: 12px;
  color: #000;
`;

const TrayTools = styled.div`
  display: flex;
  align-items: center;
  gap: 5px;
  margin-left: auto;
`;

const Tray = styled.div`
  display: flex;
  align-items: center;
  gap: 8px;
  height: 41px;
  padding: 0 2px 0 4px;
  border: 1px solid;
  border-color: #808080 #fff #fff #808080;
`;

const Clock = styled.time`
  width: 74px;
  margin-right: 7px;
  font-size: 12px;
  line-height: 13px;
  text-align: center;
  color: #000;
`;

const T6Logo = styled.span`
  font-family: "Liberation Sans", sans-serif;
  font-size: 26px;
  font-weight: 700;
  line-height: 28px;
  color: #111;

  b {
    color: #e2231a;
  }
`;

const Flag = () => (
  <Svg size={16}>
    <path d="M2 3q3-2 6 0L7 8q-3-2-6 0Z" fill="#e8592b" />
    <path d="M9 3q3 2 6 0l-1 5q-3 2-6 0Z" fill="#7db83a" />
    <path d="M1 9q3-2 6 0l-1 5q-3-2-6 0Z" fill="#3f7fd0" />
    <path d="M8 9q3 2 6 0l-1 5q-3 2-6 0Z" fill="#f3c22b" />
  </Svg>
);

const CalcIcon = () => (
  <Svg size={34}>
    <rect x="5" y="1" width="24" height="32" rx="2" fill="#a9cfe8" stroke="#6e9dbd" />
    <path d="M7 3h20v10H7Z" fill="#eaf4fb" stroke="#7aa3bf" />
    <path d="M21 6h3v4h-3Z" stroke="#444" />
    <path d="M8 18h15M8 22h15M8 26h15M8 30h15" stroke="#f5fbff" strokeWidth="2.500" strokeDasharray="3 1" />
    <path d="M24 18h3M24 22h3" stroke="#f5fbff" strokeWidth="2.500" />
    <path d="M24 25h3v6h-3Z" fill="#f0962c" />
  </Svg>
);

const WechatIcon = () => (
  <Svg size={36}>
    <ellipse cx="14" cy="13" rx="13" ry="11" fill="#2fcf66" />
    <path d="m6 21-2 6 8-3Z" fill="#2fcf66" />
    <ellipse cx="25" cy="22" rx="10" ry="9" fill="#ededed" />
    <path d="m30 28 3 4-7-1Z" fill="#ededed" />
    <circle cx="10" cy="9" r="2" fill="#17703a" />
    <circle cx="18" cy="9" r="2" fill="#17703a" />
    <circle cx="22" cy="19" r="1.500" fill="#777" />
    <circle cx="29" cy="19" r="1.500" fill="#777" />
  </Svg>
);

const RedLogo = () => (
  <Svg size={34}>
    <path
      d="M30 1v7l-8 4h-7l-6 7v6l3 2h9l3-5h-8l3-5h12l-3 11-5 4H7l-5-5V17l8-9 12-2 3-4Z"
      fill="#e02a2a"
      stroke="#9c1414"
    />
  </Svg>
);

const BrowserLogo = () => (
  <Svg size={36}>
    <circle cx="17" cy="18" r="12" stroke="#58b51f" strokeWidth="6" />
    <path d="M8 18h22" stroke="#58b51f" strokeWidth="5" />
    <path d="M24 22h10l-2 4h-9Z" fill="#d4d0c8" />
    <path d="M5 34Q-2 27 11 13T32 3q-14 4-22 15T5 34Z" fill="#7ad134" stroke="#4a9c1c" />
  </Svg>
);

const ExplorerIcon = () => (
  <Svg size={36}>
    <path d="M2 4 5 2h9l2 3h17v26H2Z" fill="#e9c765" stroke="#b8902f" />
    <path d="M5 5h9M14 7h9M22 9h9" stroke="#fff" strokeWidth="3" />
    <path d="M6 5h3M16 7h3M24 9h3" stroke="#4aa060" strokeWidth="2" />
    <path d="M2 10h31v21H2Z" fill="#fbe596" />
    <path d="M5 34V24l4-3h18l4 3v10h-6v-7H11v7Z" fill="#7fbfe3" stroke="#4b93bf" />
  </Svg>
);

const Taskbar = () => (
  <TaskBar>
    <StartButton>
      <Flag />
      开始
    </StartButton>
    <TaskButton $flat aria-label="计算器">
      <CalcIcon />
    </TaskButton>
    <TaskButton aria-label="微信">
      <WechatIcon />
    </TaskButton>
    <TaskButton aria-label="G">
      <RedLogo />
    </TaskButton>
    <TaskButton>
      <T6Logo>
        <b>T</b>6
      </T6Logo>
    </TaskButton>
    <TaskButton aria-label="浏览器">
      <BrowserLogo />
    </TaskButton>
    <TaskButton $active aria-label="Creo">
      <CreoMark size={36} />
    </TaskButton>
    <TaskButton aria-label="资源管理器">
      <ExplorerIcon />
    </TaskButton>
    <TrayTools>
      <Svg size={16}>
        <path d="M1 7h14v8H1Z" fill="#efefef" stroke="#777" />
        <path d="M3 9.500h10M3 12.500h10" stroke="#666" strokeDasharray="1 1" />
        <path d="m3 6 3-3 3 1 4-3" stroke="#777" />
      </Svg>
      <Rule $height={22} />
      <Svg size={18}>
        <circle cx="9" cy="9" r="7.500" fill="#1228c8" stroke="#8a97b5" />
        <path d="M6.500 7q0-3 2.500-3t2.500 2.500-2.500 3V11M9 12.500V14" stroke="#fff" strokeWidth="2" />
      </Svg>
      <Rule $height={22} />
      <svg width="9" height="18" viewBox="0 0 9 18" aria-hidden="true">
        <path d="M3 1.500h5v3H3Z" fill="#fff" stroke="#111" />
        <path d="M1 3.500h5v3H1Z" fill="#fff" stroke="#111" />
        <path d="M1 13h7l-3.500 4Z" fill="#111" />
      </svg>
      <Tray>
        <Svg size={10}>
          <path d="m2 4 3-3 3 3M2 9l3-3 3 3" stroke="#111" strokeWidth="1.500" />
        </Svg>
        <Svg size={16}>
          <path d="M1 10q2-2 2-5 1-4 5-4t5 4 2 5l-2 1v4H3v-4Z" fill="#161616" />
          <path d="M5 9h6v5H5Z" fill="#fff" />
          <path d="M3 8h10v2H3Z" fill="#d92020" />
          <circle cx="6.500" cy="4" r="1" fill="#fff" />
          <circle cx="9.500" cy="4" r="1" fill="#fff" />
          <circle cx="12" cy="12" r="4" fill="#f08a35" />
          <path d="M10 11h4M10 13h4" stroke="#fff" />
        </Svg>
        <Svg size={16}>
          <circle cx="8" cy="8" r="8" fill="#f4dc1b" />
          <path d="M1 6a7 7 0 0 1 12-3M15 10a7 7 0 0 1-12 3" stroke="#3f9f2f" strokeWidth="2" />
          <path d="M8 4v8M4 8h8" stroke="#23751c" strokeWidth="2.500" />
        </Svg>
        <Svg size={16}>
          <path d="M5 4h10v8H5Z" fill="#8d9193" stroke="#fff" />
          <path d="M7 15h8M1 1v4h4V1M3 5v9h3" stroke="#555" strokeWidth="1.500" />
        </Svg>
        <Svg size={16}>
          <path d="M2 6h3l4-4v12l-4-4H2Z" fill="#fff" stroke="#555" />
        </Svg>
        <Clock>
          <Mixed text="11:07 周三" />
          <br />
          <Mono>2021/12/22</Mono>
        </Clock>
        <Svg size={28}>
          <path d="M1 2h20v18H1Z" fill="#f4f4f4" stroke="#999" />
          <path d="M4 6h14M4 10h6M12 10h6M4 14h6" stroke="#999" strokeWidth="2" />
          <path d="M12 12h15v15H12Z" fill="#d81e1e" />
          <path d="M17 16h5v3h-4v4h5" stroke="#fff" strokeWidth="1.500" />
        </Svg>
        <Svg size={16}>
          <path d="M0 2h16v11H0Z" fill="#2c6fc0" stroke="#e8eef5" />
          <path d="M1 3h14v5q-8-1-14 3Z" fill="#6fb0e8" />
        </Svg>
      </Tray>
    </TrayTools>
  </TaskBar>
);

/* ---------- Forum mark over the lower right corner ---------- */

const ForumMark = styled.div`
  position: absolute;
  right: 20px;
  bottom: 7px;
  width: 166px;
  pointer-events: none;
`;

const ForumName = styled.div`
  display: flex;
  font-size: 40px;
  font-style: italic;
  font-weight: 300;
  line-height: 44px;
  color: #000;

  b {
    margin-right: 5px;
    font-weight: 300;
    color: #ff6a35;
  }
`;

const ForumUrl = styled.div`
  font-size: 17px;
  font-style: italic;
  line-height: 18px;
  color: rgba(120, 120, 125, 0.75);
`;

const Flame = styled.svg`
  position: absolute;
  left: 64px;
  top: -19px;
`;

const App = () => (
  <Screen>
    <GlobalStyle />
    <Gradients />
    <Desktop>
      <Window>
        <TitleBar>
          <QuickAccess>
            <CreoMark />
            <Brand>creo</Brand>
            <Rule />
            <NewIcon />
            <OpenIcon />
            <SaveIcon />
            <RedoIcon />
            <Caret $color="#a6a6a6" />
            <RegenIcon />
            <WindowsIcon />
            <Caret />
            <CloseWinIcon />
            <RedoIcon flip />
            <Caret $color="#a6a6a6" />
            <Rule />
            <CustomizeMark />
          </QuickAccess>
          <Title>
            <Mixed text="MFG0002 (活动的) - Creo Parametric 7.0" size={13} />
          </Title>
          <WindowButtons>
            <Svg size={16}>
              <path d="M3 11h9" stroke="#808080" strokeWidth="3" />
            </Svg>
            <Svg size={16}>
              <path d="M3 4h10v9H3ZM3 5h10" stroke="#808080" strokeWidth="1.500" />
            </Svg>
            <Svg size={16}>
              <path d="m4 4 8 8M12 4l-8 8" stroke="#808080" strokeWidth="2.500" />
            </Svg>
          </WindowButtons>
        </TitleBar>
        <TabBar>
          <Tab $kind="file">文件</Tab>
          <Tab $kind="active">模具</Tab>
          {["分析", "模型", "注释", "工具", "视图", "应用程序"].map((name) => (
            <Tab key={name}>{name}</Tab>
          ))}
          <TabTools>
            <Svg size={16}>
              <path d="m4 9 4-4 4 4" stroke="#fff" strokeWidth="2.500" />
            </Svg>
            <Svg size={16}>
              <path d="m2 14 4-4" stroke="#b9bcbd" strokeWidth="2" />
              <circle cx="9" cy="7" r="5" fill="#cfdde2" stroke="#2b2f30" />
            </Svg>
            <Svg size={18}>
              <circle cx="9" cy="9" r="8" fill="#2f3233" />
              <path d="m3 7 6-3 6 3-6 3ZM5 10v3l4 2 4-2v-3l-4 2Z" fill="#fff" />
            </Svg>
            <Caret $color="#fff" />
            <Svg size={18}>
              <circle cx="9" cy="9" r="8" fill="#2f3233" />
              <path d="M6 7q0-3 3-3t3 2.500T9 9.500V11M9 12.500V15" stroke="#fff" strokeWidth="2" />
            </Svg>
          </TabTools>
        </TabBar>
        <Ribbon />
        <Workspace>
          <ModelTree />
          <Graphics />
        </Workspace>
        <Status />
      </Window>
    </Desktop>
    <Taskbar />
    <ForumMark>
      <ForumName>
        <b>野火</b>论坛
      </ForumName>
      <ForumUrl>www.proewildfire.cn</ForumUrl>
      <Flame width="20" height="40" viewBox="0 0 20 40" aria-hidden="true">
        <path d="M6 0Q19 10 18 24 14 36 3 40 14 26 6 0ZM0 9Q10 16 9 30L4 34Q8 20 0 9Z" fill="#ff6a35" />
      </Flame>
    </ForumMark>
  </Screen>
);

export default App;
